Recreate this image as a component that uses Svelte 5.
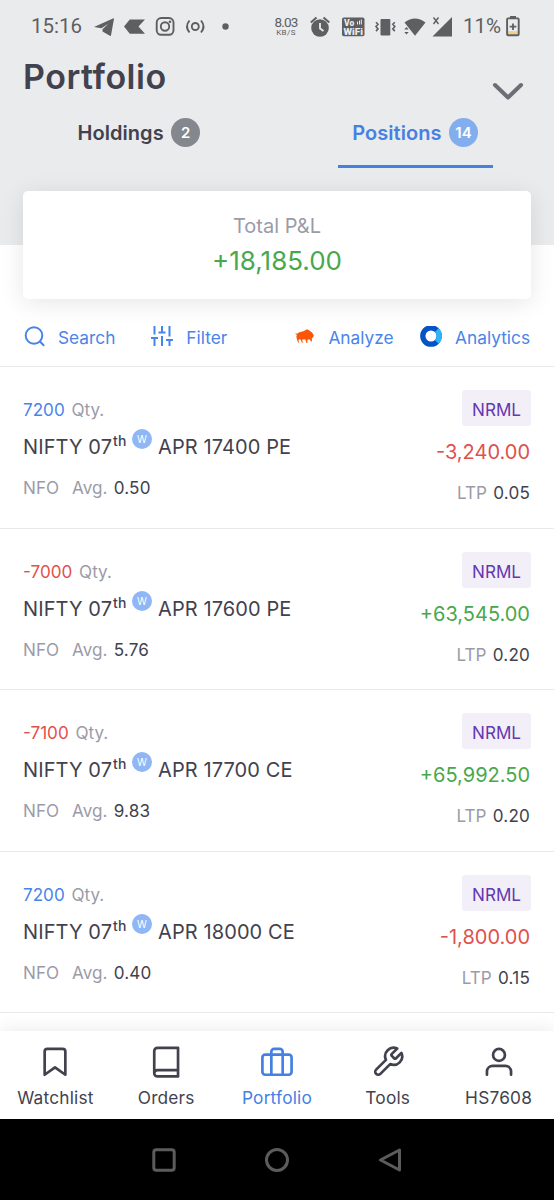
<script lang="ts">
  type Position = {
    qty: number;
    name: string;
    avg: string;
    pnl: string;
    ltp: string;
  };

  const positions: Position[] = [
    { qty: 7200, name: 'APR 17400 PE', avg: '0.50', pnl: '-3,240.00', ltp: '0.05' },
    { qty: -7000, name: 'APR 17600 PE', avg: '5.76', pnl: '+63,545.00', ltp: '0.20' },
    { qty: -7100, name: 'APR 17700 CE', avg: '9.83', pnl: '+65,992.50', ltp: '0.20' },
    { qty: 7200, name: 'APR 18000 CE', avg: '0.40', pnl: '-1,800.00', ltp: '0.15' }
  ];

  const navItems = [
    { id: 'watchlist', label: 'Watchlist' },
    { id: 'orders', label: 'Orders' },
    { id: 'portfolio', label: 'Portfolio' },
    { id: 'tools', label: 'Tools' },
    { id: 'account', label: 'HS7608' }
  ];

  let activeTab = 'positions';
  let activeNav = 'portfolio';
</script>

<div class="screen">
  <header class="top">
    <div class="status">
      <span class="clock">15:16</span>
      <svg class="status-left" width="136" height="24" viewBox="0 0 136 24">
        <path d="M0 13 19.5 4.2Q20 4 20 4.8L17 21.3Q16.8 22.3 15.9 21.8L8.5 17.5V15.2L14.5 9.5 7.5 14.2Z" />
        <path d="M30 12.5 35.8 5.5H51L44.5 12.5 51 19.8H35.8Z" />
        <g fill="none" stroke="#5d5f61" stroke-width="1.9">
          <rect x="62.7" y="4" width="16.8" height="16.8" rx="4.5" />
          <circle cx="71" cy="12.5" r="4.2" />
          <circle cx="101.3" cy="12.5" r="3.5" />
          <path d="M95.5 6.5Q90.5 12.5 95.5 18.5M107 6.5Q112 12.5 107 18.5" />
        </g>
        <circle cx="76" cy="7.7" r="1.3" />
        <circle cx="131.5" cy="12.5" r="3.2" />
      </svg>
      <span class="speed"><b>8.03</b><small>KB/S</small></span>
      <svg class="status-right" width="145" height="24" viewBox="0 0 145 24">
        <circle cx="10" cy="14" r="8.8" />
        <path d="M.8 8.5 6.5 3.5M19.3 8.5 13.5 3.5" stroke="#5d5f61" stroke-width="2" />
        <path d="M10 9V14.5L13.5 17" fill="none" stroke="#e9ebed" stroke-width="1.8" />
        <rect x="32" y="3.5" width="22.5" height="18.8" rx="1.8" />
        <text class="vo" x="34" y="11.7">Vo</text>
        <path d="M47.5 7.5V10.5M49.5 6.5V10.5M51.3 5.5V10.5" stroke="#e9ebed" stroke-width="1" />
        <text class="vo" x="33.6" y="20.7" textLength="19.3" lengthAdjust="spacingAndGlyphs">WiFi</text>
        <rect x="70.5" y="5" width="9.8" height="16.5" rx="1" />
        <path d="M66 8.3l2 2-2 2.3 2 2.3-2 2.2M84.8 8.3l-2 2 2 2.3-2 2.3 2 2.2" fill="none" stroke="#5d5f61" stroke-width="1.6" />
        <path d="M94.5 8.5Q105 .5 115.5 8.5L105 21.8Z" />
        <path d="M94.3 15.5 96.5 13 98.7 15.5ZM94.3 18 96.5 20.5 98.7 18Z" />
        <path d="M142 3V22.5H122.5Z" />
        <path d="M123.5 3.5 128.5 10M128.5 3.5 123.5 10" stroke="#5d5f61" stroke-width="1.4" />
      </svg>
      <span class="percent">11%</span>
      <svg class="battery" width="14" height="24" viewBox="0 0 14 24">
        <path d="M4 2H10V5H4Z" />
        <rect x="1.9" y="17.2" width="10" height="3" fill="#f5cf83" />
        <rect x="1.1" y="4.4" width="11.6" height="16.8" rx="1" fill="none" stroke="#5d5f61" stroke-width="1.9" />
        <path d="M7 9.5V16M3.7 12.7H10.3" stroke="#5d5f61" stroke-width="1.8" />
      </svg>
    </div>

    <div class="title-row">
      <h1>Portfolio</h1>
      <svg width="32" height="19" viewBox="0 0 32 19">
        <path d="M3 3 16 15.5 29 3" fill="none" stroke="#6c6e76" stroke-width="4" stroke-linecap="round" stroke-linejoin="round" />
      </svg>
    </div>

    <div class="tabs">
      <button class="tab" class:active={activeTab === 'holdings'} on:click={() => (activeTab = 'holdings')}>
        Holdings<span class="count">2</span>
      </button>
      <button class="tab" class:active={activeTab === 'positions'} on:click={() => (activeTab = 'positions')}>
        Positions<span class="count">14</span>
      </button>
    </div>
  </header>

  <main>
    <section class="total">
      <span class="total-label">Total P&amp;L</span>
      <span class="total-value">+18,185.00</span>
    </section>

    <div class="toolbar">
      <button class="tool search">
        <svg width="22" height="22" viewBox="0 0 22 22" fill="none" stroke="#4984ea" stroke-width="2" stroke-linecap="round">
          <circle cx="10" cy="9.5" r="8.3" />
          <path d="M16 15.5 19.6 19.3" />
        </svg>
        <span>Search</span>
      </button>
      <button class="tool filter">
        <svg width="22" height="22" viewBox="0 0 22 22" fill="none" stroke="#4984ea" stroke-width="2">
          <path d="M3.5 0V8.5M3.5 12V20M0 12H7M11 0V6M7.5 6.5H14.5M11 10V20M18.5 0V10.5M18.5 14V20M15 14H22" />
        </svg>
        <span>Filter</span>
      </button>
      <button class="tool analyze">
        <svg width="19" height="15" viewBox="0 0 19 15" fill="#fb5607">
          <path d="M0 4 2.2 4.8 4.2 3.2 8.5 2.3 12 .3 14 1.2 17 3.5 18.8 6.2 18 8.5 16.8 9.2 17 12.5H16L14.9 10.5 12.8 10.6 12.2 11.8 12.6 13.8H11.3L10.4 10.6 7.6 10.3 7.2 11.5 8 13.8H7L5.5 10.5 4 10.3 3.5 11.8 4.2 13.6H3.2L1.8 10 1.4 7.5 1.8 6Z" />
        </svg>
        <span>Analyze</span>
      </button>
      <button class="tool analytics">
        <svg width="22" height="22" viewBox="0 0 22 22" fill="none" stroke-width="5.3">
          <circle cx="11" cy="10" r="8.2" stroke="#0752c4" />
          <path d="M16.7 4.1A8.2 8.2 0 0 1 16.7 15.9" stroke="#2fb4f5" />
        </svg>
        <span>Analytics</span>
      </button>
    </div>

    <ul class="positions">
      {#each positions as position}
        <li class="position">
          <div class="left">
            <div class="qty"><span class:short={position.qty < 0}>{position.qty}</span> Qty.</div>
            <div class="name">
              <span>NIFTY 07</span><span class="th">th</span><span class="weekly">W</span><span>{position.name}</span>
            </div>
            <div class="avg"><span class="exchange">NFO</span>Avg. <em>{position.avg}</em></div>
          </div>
          <div class="right">
            <span class="product">NRML</span>
            <span class="pnl" class:loss={position.pnl.startsWith('-')}>{position.pnl}</span>
            <span class="ltp">LTP <em>{position.ltp}</em></span>
          </div>
        </li>
      {/each}
    </ul>
  </main>

  <nav class="bottom-nav">
    {#each navItems as item}
      <button class="nav-item" class:active={activeNav === item.id} on:click={() => (activeNav = item.id)}>
        <svg width="34" height="34" viewBox="0 0 24 24" fill="none" stroke="currentColor" stroke-width="1.9" stroke-linecap="round" stroke-linejoin="round">
          {#if item.id === 'watchlist'}
            <path d="M19.3 21 12 15.8 4.7 21V4.6Q4.7 2.7 6.6 2.7H17.4Q19.3 2.7 19.3 4.6Z" />
          {:else if item.id === 'orders'}
            <path d="M3.7 19.8A2.3 2.3 0 0 1 6 17.7H20.5M6 2H20.5V22.2H6A2.3 2.3 0 0 1 3.7 19.9V4.3A2.3 2.3 0 0 1 6 2Z" />
          {:else if item.id === 'portfolio'}
            <rect x="1.7" y="6.8" width="20.6" height="14.2" rx="2" />
            <path d="M16 21V4.8A2 2 0 0 0 14 2.8H10A2 2 0 0 0 8 4.8V21" />
          {:else if item.id === 'tools'}
            <path d="M14.7 6.3a1 1 0 0 0 0 1.4l1.6 1.6a1 1 0 0 0 1.4 0l3.77-3.77a6 6 0 0 1-7.94 7.94l-6.91 6.91a2.12 2.12 0 0 1-3-3l6.91-6.91a6 6 0 0 1 7.94-7.94l-3.76 3.76z" />
          {:else}
            <path d="M20.5 21V18.5A4 4 0 0 0 16.5 14.8H7.5A4 4 0 0 0 3.5 18.5V21" />
            <circle cx="12" cy="7" r="4.2" />
          {/if}
        </svg>
        <span>{item.label}</span>
      </button>
    {/each}
  </nav>

  <div class="system-nav">
    <svg width="24" height="24" viewBox="0 0 24 24"><rect x="1.8" y="1.8" width="20.4" height="20.4" rx="2.5" /></svg>
    <svg width="24" height="24" viewBox="0 0 24 24"><circle cx="12" cy="12" r="10.5" /></svg>
    <svg width="24" height="24" viewBox="0 0 24 24"><path d="M21.5 2V22L2.5 12Z" /></svg>
  </div>
</div>

<style>
  :global(body) {
    background: #fff;
  }

  .screen {
    display: flex;
    flex-direction: column;
    width: 554px;
    height: 1200px;
    overflow: hidden;
    font-family: Inter, sans-serif;
    font-weight: 390;
    color: #42424e;
    background: #fff;
  }

  button {
    padding: 0;
    border: none;
    background: none;
    font: inherit;
    color: inherit;
    cursor: pointer;
  }

  .top {
    flex: none;
    height: 245px;
    background: #e9ebed;
  }

  .status {
    display: flex;
    align-items: center;
    height: 52px;
    padding-left: 31px;
    font-family: Roboto, sans-serif;
    font-size: 20.5px;
    font-weight: 400;
    color: #5d5f61;
    fill: #5d5f61;
  }

  .status svg {
    flex: none;
  }

  .clock {
    width: 63px;
  }

  .speed {
    display: flex;
    flex-direction: column;
    align-items: center;
    width: 24px;
    margin: 1px 12px 0 44px;
  }

  .speed b {
    font-size: 13.5px;
    font-weight: 400;
    line-height: 13px;
    letter-spacing: -0.8px;
  }

  .speed small {
    font-size: 8px;
    line-height: 8px;
    letter-spacing: 0.4px;
  }

  .vo {
    font-family: Roboto, sans-serif;
    font-size: 8.5px;
    font-weight: 900;
    fill: #e9ebed;
  }

  .percent {
    width: 43px;
    margin-left: 8px;
  }

  .title-row {
    display: flex;
    justify-content: space-between;
    height: 58px;
    padding: 0 30px 0 23px;
  }

  .title-row svg {
    margin-top: 30px;
  }

  h1 {
    margin: 0;
    font-size: 34px;
    font-weight: 590;
    letter-spacing: 0.5px;
    line-height: 50px;
  }

  .tabs {
    display: flex;
    justify-content: space-between;
    padding: 0 61.5px 0 63px;
  }

  .tab {
    display: flex;
    align-items: flex-start;
    gap: 7.5px;
    height: 58px;
    box-sizing: border-box;
    padding: 7px 14.5px 0;
    border-bottom: 3px solid transparent;
    font-size: 20px;
    font-weight: 560;
    letter-spacing: 0.05px;
    line-height: 32px;
  }

  .tab.active {
    color: #4580e3;
    border-color: #4580e3;
  }

  .count {
    width: 29px;
    height: 29px;
    margin-top: 1px;
    border-radius: 50%;
    background: #85878f;
    color: #fff;
    font-size: 15px;
    line-height: 30px;
    text-align: center;
  }

  .active .count {
    background: #83aeee;
  }

  main {
    flex: none;
    height: 786px;
    margin-top: -54px;
  }

  .total {
    display: flex;
    flex-direction: column;
    align-items: center;
    box-sizing: border-box;
    height: 108px;
    margin: 0 23px;
    padding-top: 19px;
    border-radius: 5px;
    background: #fff;
    box-shadow: 0 4px 24px rgba(0, 0, 0, 0.1);
  }

  .total-label {
    font-size: 20px;
    line-height: 32px;
    color: #9b9ba8;
  }

  .total-value {
    font-size: 26px;
    line-height: 37px;
    color: #48a84c;
  }

  .toolbar {
    display: flex;
    align-items: center;
    box-sizing: border-box;
    height: 68px;
    padding: 9px 24px 0;
    border-bottom: 1.5px solid #e8e9ea;
    font-size: 17.3px;
    color: #4984ea;
  }

  .tool {
    display: flex;
    align-items: center;
    gap: 12px;
  }

  .filter {
    margin-left: 36px;
    gap: 13px;
  }

  .analyze {
    margin-left: auto;
    gap: 14px;
  }

  .analyze svg {
    margin-bottom: 2px;
  }

  .analytics {
    margin-left: 26px;
    gap: 13.5px;
  }

  .positions {
    margin: 0;
    padding: 0;
    list-style: none;
  }

  .position {
    display: flex;
    justify-content: space-between;
    box-sizing: border-box;
    height: 161.5px;
    padding: 23px 23px 0;
    border-bottom: 1.5px solid #e8e9ea;
    color: #9b9ba8;
    font-size: 17.1px;
  }

  .qty {
    padding-top: 2px;
    line-height: 36px;
  }

  .qty span {
    margin-right: 2px;
    color: #4984ea;
  }

  .qty .short {
    color: #df514c;
  }

  .name {
    display: flex;
    font-size: 20px;
    line-height: 38px;
    letter-spacing: 0.1px;
    color: #42424e;
  }

  .th {
    margin-left: 1px;
    font-size: 14px;
    font-weight: 500;
    line-height: 26px;
  }

  .weekly {
    width: 20px;
    height: 20px;
    margin: 1px 6px 0 5.5px;
    border-radius: 50%;
    background: #8fb6f5;
    color: #fff;
    font-size: 10px;
    line-height: 20px;
    text-align: center;
  }

  .avg {
    line-height: 43px;
  }

  .avg em,
  .ltp em {
    margin-left: 1.5px;
    letter-spacing: 0.2px;
  }

  .exchange {
    margin-right: 13px;
  }

  em {
    font-style: normal;
    color: #42424e;
  }

  .right {
    display: flex;
    flex-direction: column;
    align-items: flex-end;
  }

  .product {
    padding: 2px 10px 0;
    height: 34px;
    border-radius: 3px;
    background: #f3eff9;
    color: #6438ae;
    line-height: 36px;
  }

  .pnl {
    margin-right: 1px;
    font-size: 20px;
    line-height: 52px;
    color: #48a84c;
  }

  .pnl.loss {
    color: #df514c;
  }

  .ltp {
    margin-right: 1px;
    line-height: 30px;
  }

  .bottom-nav {
    flex: none;
    display: grid;
    grid-template-columns: repeat(5, 1fr);
    height: 88px;
    margin-top: 54px;
    background: #fff;
    box-shadow: 0 -3px 16px rgba(0, 0, 0, 0.07);
  }

  .nav-item {
    display: flex;
    flex-direction: column;
    align-items: center;
    padding-top: 14px;
    font-size: 17.3px;
    line-height: 38px;
    letter-spacing: 0.2px;
  }

  .nav-item.active {
    color: #4580e3;
  }

  .system-nav {
    flex: none;
    display: flex;
    justify-content: center;
    align-items: center;
    gap: 89px;
    height: 81px;
    background: #000;
    fill: none;
    stroke: #5c5c5c;
    stroke-width: 3;
    stroke-linejoin: round;
  }
</style>
